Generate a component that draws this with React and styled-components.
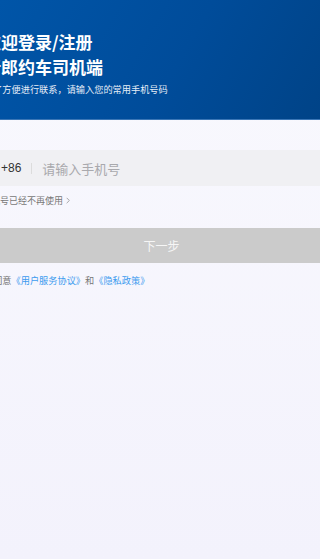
import styled, { createGlobalStyle } from "styled-components";

const GlobalStyle = createGlobalStyle`
  html, body {
    margin: 0;
    padding: 0;
    overflow-x: hidden;
    font-family: "Noto Sans CJK SC", "Noto Sans", sans-serif;
  }
`;

function App() {
  return (
    <>
      <GlobalStyle />
      <Screen>
        <Header>
          <Inner>
            <Title>欢迎登录/注册</Title>
            <Title>新郎约车司机端</Title>
            <Subtitle>为了方便进行联系，请输入您的常用手机号码</Subtitle>
          </Inner>
        </Header>
        <Body>
          <Inner>
            <PhoneField>
              <Code>+86</Code>
              <Divider />
              <PhoneInput placeholder="请输入手机号" />
            </PhoneField>
            <HelpLink>
              手机号已经不再使用
              <Chevron viewBox="0 0 6 10">
                <path d="M1 1l4 4-4 4" />
              </Chevron>
            </HelpLink>
            <NextButton disabled>下一步</NextButton>
            <Agreement>
              已同意<Link>《用户服务协议》</Link>和<Link>《隐私政策》</Link>
            </Agreement>
          </Inner>
        </Body>
      </Screen>
    </>
  );
}

const Screen = styled.div`
  min-height: 559px;
  display: flex;
  flex-direction: column;
  background: linear-gradient(180deg, #f9f9fe 0%, #f3f2fc 100%);
`;

const Inner = styled.div`
  width: 355px;
  margin-left: -16px;
  display: flex;
  flex-direction: column;
`;

const Header = styled.div`
  height: 120px;
  padding-top: 29px;
  box-sizing: border-box;
  background: linear-gradient(120deg, #0055a8 0%, #004c9a 55%, #004387 100%);
  border-bottom: 1px solid #3a76b6;
`;

const Title = styled.div`
  font-size: 17px;
  line-height: 25px;
  font-weight: 700;
  color: #ffffff;
  white-space: nowrap;
`;

const Subtitle = styled.div`
  margin-top: 4px;
  font-size: 9.2px;
  line-height: 13px;
  color: #e6edf7;
  white-space: nowrap;
`;

const Body = styled.div`
  flex: 1;
  padding-top: 30px;
`;

const PhoneField = styled.div`
  height: 36px;
  display: flex;
  align-items: center;
  padding-left: 17px;
  background: #f0f0f3;
`;

const Code = styled.span`
  font-size: 12px;
  color: #333;
  font-family: "Liberation Sans", sans-serif;
`;

const Divider = styled.span`
  width: 1px;
  height: 11px;
  margin: 0 10px;
  background: #dcdcdc;
`;

const PhoneInput = styled.input`
  flex: 1;
  border: none;
  outline: none;
  background: transparent;
  padding: 0;
  font-size: 13px;
  font-family: "Noto Sans CJK SC", sans-serif;
  &::placeholder {
    color: #a9a9ad;
  }
`;

const HelpLink = styled.div`
  margin-top: 8px;
  display: flex;
  align-items: center;
  gap: 3px;
  font-size: 9px;
  line-height: 13px;
  color: #777;
  margin-left: -2px;
`;

const Chevron = styled.svg`
  width: 4px;
  height: 7px;
  fill: none;
  stroke: #888;
  stroke-width: 1.1;
`;

const NextButton = styled.button`
  margin-top: 21px;
  height: 35px;
  border: none;
  background: #cbcbcb;
  color: #f6f6f6;
  font-size: 12px;
  font-family: "Noto Sans CJK SC", sans-serif;
`;

const Agreement = styled.div`
  margin-top: 11px;
  font-size: 9.2px;
  line-height: 13px;
  color: #777;
  white-space: nowrap;
`;

const Link = styled.span`
  color: #3d9bef;
`;

export default App;
